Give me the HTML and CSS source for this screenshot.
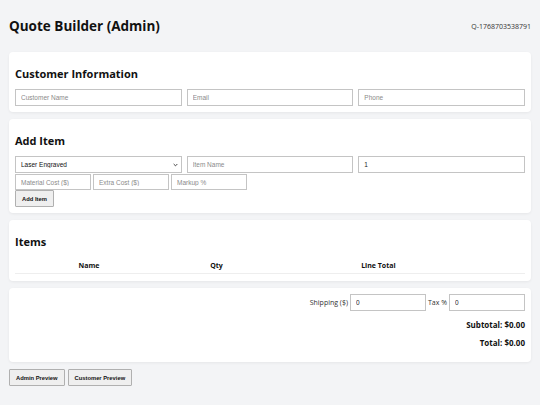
FILE: index.html
```html
<!DOCTYPE html>
<html lang="en">
<head>
    <meta charset="UTF-8">
    <meta name="viewport" content="width=device-width, initial-scale=1.0">
    <title>Quote Builder (Admin)</title>
    <link rel="stylesheet" href="styles.css">
</head>
<body>
    <div class="header">
        <h1>Quote Builder (Admin)</h1>
        <span class="quote-id">Q-1768703538791</span>
    </div>

    <div class="card">
        <h2>Customer Information</h2>
        <div class="row">
            <input type="text" placeholder="Customer Name">
            <input type="text" placeholder="Email">
            <input type="text" placeholder="Phone">
        </div>
    </div>

    <div class="card">
        <h2>Add Item</h2>
        <div class="row">
            <select>
                <option>Laser Engraved</option>
            </select>
            <input type="text" placeholder="Item Name">
            <input type="text" value="1">
        </div>
        <div class="row small">
            <input type="text" placeholder="Material Cost ($)">
            <input type="text" placeholder="Extra Cost ($)">
            <input type="text" placeholder="Markup %">
        </div>
        <button class="btn">Add Item</button>
    </div>

    <div class="card">
        <h2>Items</h2>
        <table>
            <thead>
                <tr>
                    <th class="col-name">Name</th>
                    <th class="col-qty">Qty</th>
                    <th class="col-total">Line Total</th>
                    <th class="col-actions"></th>
                </tr>
            </thead>
            <tbody></tbody>
        </table>
    </div>

    <div class="card totals">
        <div class="extras">
            <label>Shipping ($)</label>
            <input type="text" value="0">
            <label>Tax %</label>
            <input type="text" value="0">
        </div>
        <p class="sum">Subtotal: $0.00</p>
        <p class="sum">Total: $0.00</p>
    </div>

    <div class="actions">
        <button class="btn">Admin Preview</button>
        <button class="btn">Customer Preview</button>
    </div>
</body>
</html>
```

FILE: styles.css
```css
body {
    margin: 0;
    padding: 9px;
    font-family: "Open Sans", sans-serif;
    background: #f3f4f6;
    color: #111;
}

.header {
    display: flex;
    justify-content: space-between;
    align-items: center;
    height: 34px;
    margin-bottom: 9px;
}

.header h1 {
    margin: 0;
    font-size: 13.5px;
    font-weight: 700;
}

.quote-id {
    font-size: 7px;
    color: #333;
}

.card {
    background: #fff;
    border-radius: 4px;
    box-shadow: 0 1px 3px rgba(0, 0, 0, 0.06);
    padding: 6px 6px 6px;
    margin-bottom: 7px;
}

.card h2 {
    margin: 8px 0 7px;
    font-size: 11px;
    line-height: 16px;
    font-weight: 700;
}

.row {
    display: flex;
    gap: 5px;
}

.row input,
.row select {
    flex: 1 1 0;
    min-width: 0;
}

.row.small {
    gap: 2px;
    margin-top: 1px;
}

.row.small input {
    flex: 0 0 76px;
    height: 16px;
}

input,
select {
    box-sizing: border-box;
    height: 17px;
    border: 1px solid #c4c4c4;
    border-radius: 0;
    padding: 0 5px;
    font-family: "Liberation Sans", Arial, sans-serif;
    font-size: 6.5px;
    color: #222;
    background: #fff;
}

input::placeholder {
    color: #8a8a8a;
}

select {
    -webkit-appearance: none;
    appearance: none;
    color: #111;
    background: #fff url("data:image/svg+xml;utf8,<svg xmlns='http://www.w3.org/2000/svg' width='6' height='4' viewBox='0 0 6 4'><path d='M0.8 0.8 L3 3 L5.2 0.8' fill='none' stroke='%23333' stroke-width='1.1'/></svg>") no-repeat right 3px center;
    background-size: 5px 4px;
}

.btn {
    box-sizing: border-box;
    height: 17px;
    padding: 0 6px;
    background: #efefef;
    border: 1px solid #b0b0b0;
    border-radius: 1px;
    font-family: "Liberation Sans", Arial, sans-serif;
    font-size: 5.8px;
    font-weight: 700;
    color: #111;
}

.card .btn {
    display: block;
}

table {
    width: 100%;
    border-collapse: collapse;
    margin-bottom: 1px;
}

th {
    font-size: 7px;
    font-weight: 700;
    padding: 4px 0 3px;
    border-bottom: 1px solid #eee;
}

.col-name { width: 29%; }
.col-qty { width: 21%; }
.col-total { width: 42.5%; }

.totals {
    padding-bottom: 12px;
}

.extras {
    display: flex;
    justify-content: flex-end;
    align-items: center;
    gap: 2px;
}

.extras label {
    font-size: 7px;
    color: #333;
}

.extras input {
    width: 76px;
}

.sum {
    margin: 7px 0 0;
    text-align: right;
    font-size: 8px;
    font-weight: 700;
    line-height: 14px;
}

.sum + .sum {
    margin-top: 4px;
}

.actions {
    display: flex;
    gap: 3px;
}
```
